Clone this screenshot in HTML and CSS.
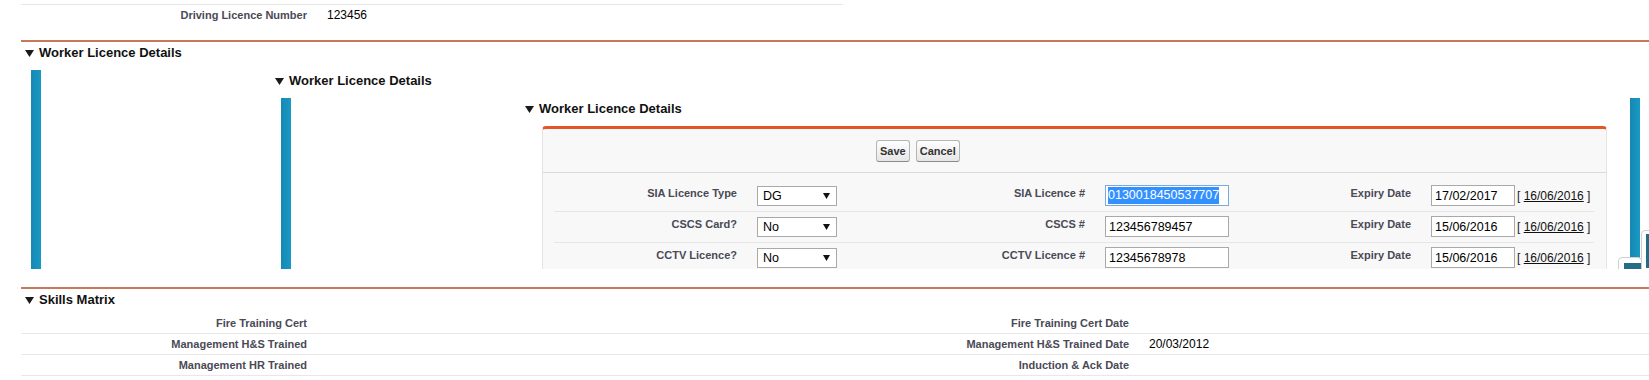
FILE: index.html
```html
<!DOCTYPE html>
<html lang="en">
<head>
    <meta charset="UTF-8" />
    <meta name="viewport" content="width=device-width, initial-scale=1" />
    <title>Worker Details</title>
    <link rel="stylesheet" href="styles.css">
</head>
<body>

    <div class="page">

        <div class="detail detail-top">
            <div class="label">Driving Licence Number</div>
            <div class="value">123456</div>
        </div>

        <!-- Worker licence details (nested inline frames) -->
        <section class="section">
            <h3 class="section-head"><svg class="twist" width="9" height="7" viewBox="0 0 9 7"><path d="M0 0H9L4.5 7Z" /></svg>Worker Licence Details</h3>
            <div class="frame">
                <div class="bar"></div>
                <section class="nested level-2">
                    <h3 class="section-head"><svg class="twist" width="9" height="7" viewBox="0 0 9 7"><path d="M0 0H9L4.5 7Z" /></svg>Worker Licence Details</h3>
                    <div class="frame-body">
                        <div class="bar"></div>
                        <section class="nested level-3">
                            <h3 class="section-head"><svg class="twist" width="9" height="7" viewBox="0 0 9 7"><path d="M0 0H9L4.5 7Z" /></svg>Worker Licence Details</h3>
                            <div class="edit-body">
                                <div class="edit-box">
                                    <div class="edit-buttons">
                                        <button class="btn" type="button">Save</button>
                                        <button class="btn" type="button">Cancel</button>
                                    </div>
                                    <div class="edit-table">
                                        <div class="e-label">SIA Licence Type</div>
                                        <div class="e-data"><div class="field select"><span>DG</span><svg width="7" height="6" viewBox="0 0 7 6"><path d="M0 0H7L3.5 6Z" /></svg></div></div>
                                        <div class="e-label">SIA Licence #</div>
                                        <div class="e-data"><div class="field field-text field-focus"><span class="sel">0130018450537707</span></div></div>
                                        <div class="e-label">Expiry Date</div>
                                        <div class="e-data"><input class="field field-date" type="text" value="17/02/2017"><span class="date-link">[&nbsp;<a href="#">16/06/2016</a>&nbsp;]</span></div>

                                        <div class="e-label">CSCS Card?</div>
                                        <div class="e-data"><div class="field select"><span>No</span><svg width="7" height="6" viewBox="0 0 7 6"><path d="M0 0H7L3.5 6Z" /></svg></div></div>
                                        <div class="e-label">CSCS #</div>
                                        <div class="e-data"><input class="field field-text" type="text" value="123456789457"></div>
                                        <div class="e-label">Expiry Date</div>
                                        <div class="e-data"><input class="field field-date" type="text" value="15/06/2016"><span class="date-link">[&nbsp;<a href="#">16/06/2016</a>&nbsp;]</span></div>

                                        <div class="e-label">CCTV Licence?</div>
                                        <div class="e-data"><div class="field select"><span>No</span><svg width="7" height="6" viewBox="0 0 7 6"><path d="M0 0H7L3.5 6Z" /></svg></div></div>
                                        <div class="e-label">CCTV Licence #</div>
                                        <div class="e-data"><input class="field field-text" type="text" value="12345678978"></div>
                                        <div class="e-label">Expiry Date</div>
                                        <div class="e-data"><input class="field field-date" type="text" value="15/06/2016"><span class="date-link">[&nbsp;<a href="#">16/06/2016</a>&nbsp;]</span></div>
                                    </div>
                                </div>
                            </div>
                        </section>
                        <div class="bar bar-right"></div>
                    </div>
                </section>
                <div class="dock dock-a"><span></span></div>
                <div class="dock dock-b"><span></span></div>
            </div>
        </section>

        <section class="section skills">
            <h3 class="section-head"><svg class="twist" width="9" height="7" viewBox="0 0 9 7"><path d="M0 0H9L4.5 7Z" /></svg>Skills Matrix</h3>
            <div class="detail">
                <div class="label">Fire Training Cert</div>
                <div class="value"></div>
                <div class="label">Fire Training Cert Date</div>
                <div class="value"></div>

                <div class="label">Management H&amp;S Trained</div>
                <div class="value"></div>
                <div class="label">Management H&amp;S Trained Date</div>
                <div class="value">20/03/2012</div>

                <div class="label">Management HR Trained</div>
                <div class="value"></div>
                <div class="label">Induction &amp; Ack Date</div>
                <div class="value"></div>
            </div>
        </section>

    </div>

</body>
</html>
```

FILE: styles.css
```css
body {
    margin: 0;
    font-family: "Liberation Sans", Arial, sans-serif;
    color: #000;
    background: #fff;
    overflow: hidden;
}

.page {
    padding: 4px 0 0 21px;
}

/* Detail tables */
.detail {
    display: grid;
    grid-template-columns: 296px 526px 296px 526px;
}

    .detail > div {
        border-bottom: 1px solid #e8e8e8;
    }

.detail-top {
    width: 822px;
    grid-template-columns: 296px 526px;
    border-top: 1px solid #e6e6e6;
    margin-bottom: 15px;
}

    .detail-top > div {
        border-bottom: none;
    }

.label {
    font-size: 11px;
    font-weight: bold;
    line-height: 13px;
    color: #4a4a56;
    text-align: right;
    padding: 4px 10px 3px 2px;
}

.value {
    font-size: 12px;
    line-height: 13px;
    padding: 4px 2px 3px 10px;
}

/* Sections */
.section {
    border-top: 2px solid #c8795a;
}

.section-head {
    margin: 0;
    display: flex;
    align-items: center;
    gap: 5px;
    padding: 3px 4px 5px;
    font-size: 13px;
    line-height: 16px;
    font-weight: bold;
    color: #111;
}

.twist {
    fill: #1a1a1a;
    flex-shrink: 0;
}

.frame {
    position: relative;
    display: flex;
    height: 203px;
    padding-top: 4px;
    box-sizing: border-box;
    overflow: hidden;
}

.bar {
    width: 10px;
    margin-left: 10px;
    flex-shrink: 0;
    background: linear-gradient(90deg, #1688b3, #1899c4);
}

.bar-right {
    margin-left: 23px;
}

.nested {
    margin-left: 230px;
    flex-shrink: 0;
}

.level-2 {
    width: 1369px;
}

.level-3 {
    flex: 1;
}

.frame-body {
    display: flex;
    padding-top: 4px;
}

.edit-body {
    padding: 4px 0 0 21px;
}

/* Edit block */
.edit-box {
    background: #f8f8f8;
    border: 1px solid #e4e4e4;
    border-top: 3px solid #e1572a;
    border-radius: 4px 4px 0 0;
}

.edit-buttons {
    display: flex;
    gap: 6px;
    padding: 11px 0 10px 333px;
    border-bottom: 1px solid #dbdbdb;
}

.btn {
    height: 22px;
    padding: 0 3px;
    font-family: "Liberation Sans", Arial, sans-serif;
    font-size: 11px;
    font-weight: bold;
    color: #333;
    background: linear-gradient(#fefefe, #e6e6e6);
    border: 1px solid #b5b5b5;
    border-bottom-color: #8a8a8a;
    border-radius: 3px;
}

.edit-table {
    display: grid;
    grid-template-columns: 193px 174px 174px 185px 141px 173px;
    margin: 0 12px 0 11px;
    padding-top: 8px;
}

    .edit-table > div {
        border-bottom: 1px solid #e6e6e6;
    }

.e-label {
    font-size: 11px;
    font-weight: bold;
    line-height: 13px;
    color: #4a4a56;
    text-align: right;
    padding: 6px 10px 0 0;
}

.e-data {
    display: flex;
    align-items: center;
    align-self: stretch;
    padding: 4px 0 5px 10px;
}

.field {
    height: 21px;
    box-sizing: border-box;
    margin: 0;
    padding: 0 3px;
    border: 1px solid #a9a9a9;
    border-radius: 0;
    background: #fff;
    color: #000;
    font-family: "Liberation Sans", Arial, sans-serif;
    font-size: 12.5px;
    outline: none;
}

.field-text {
    width: 124px;
}

.field-date {
    width: 84px;
}

.field-focus {
    display: flex;
    align-items: center;
    border-color: #7aa9dc;
    padding: 0 2px;
}

    .field-focus .sel {
        background: #3390ff;
        color: #fff;
        line-height: 17px;
    }

.select {
    width: 80px;
    height: 20px;
    display: flex;
    align-items: center;
    justify-content: space-between;
    padding: 0 6px 0 5px;
}

    .select svg {
        fill: #111;
    }

.date-link {
    margin-left: 2px;
    font-size: 12px;
    color: #222;
}

    .date-link a {
        color: #111;
        text-decoration: underline;
    }

/* Bits of docked widgets poking in at the right edge */
.dock {
    position: absolute;
    border: 1px solid #cfcfcf;
    border-radius: 4px 0 0 0;
    background: #fff;
}

    .dock span {
        position: absolute;
        background: #256d84;
    }

.dock-a {
    left: 1620px;
    top: 164px;
    width: 20px;
    height: 60px;
}

    .dock-a span {
        left: 4px;
        top: 3px;
        width: 12px;
        height: 34px;
    }

.dock-b {
    left: 1597px;
    top: 191px;
    width: 22px;
    height: 30px;
    border-radius: 4px 4px 0 0;
}

    .dock-b span {
        left: 5px;
        top: 5px;
        width: 17px;
        height: 20px;
    }

/* Skills matrix */
.skills {
    margin-top: 18px;
}
```
